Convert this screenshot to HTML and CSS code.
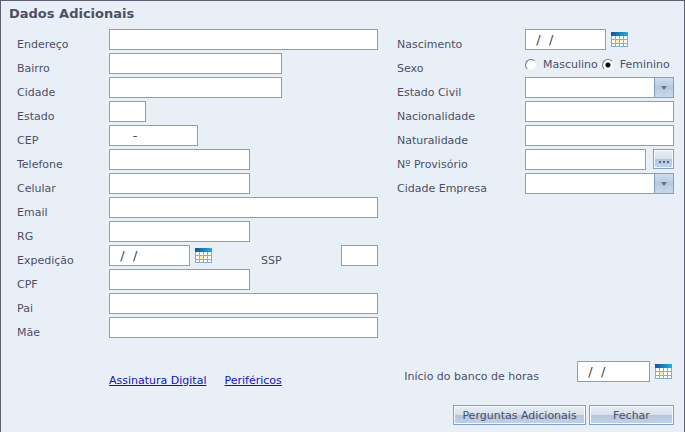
FILE: index.html
```html
<!DOCTYPE html>
<html lang="pt-BR">
  <head>
    <title>Dados Adicionais</title>
    <meta charset="utf-8" />
    <meta name="viewport" content="width=device-width, initial-scale=1" />
    <link rel="stylesheet" href="styles.css">
  </head>

  <body>
    <!-- calendar icon, shared by every date field -->
    <svg class="sprite" aria-hidden="true">
      <defs>
        <linearGradient id="calendarHead">
          <stop offset="0" stop-color="#1253a0" />
          <stop offset="1" stop-color="#14b4ea" />
        </linearGradient>
      </defs>
      <symbol id="calendar" viewBox="0 0 17 15">
        <path fill="#fff" d="M0 4h17v11H0z" />
        <path fill="#86abd0" d="M0 4h1v11H0zM4 4h1v11H4zM8 4h1v11H8zM12 4h1v11h-1zM16 4h1v11h-1zM0 7h17v1H0zM0 11h17v1H0zM0 14h17v1H0z" />
        <path fill="#fff0a0" stroke="#e6a33c" d="M4.500 7.500h4v4h-4z" />
        <path fill="url(#calendarHead)" d="M0 0h17v4H0z" />
      </symbol>
    </svg>

    <form class="panel">
      <h1 class="title">Dados Adicionais</h1>

      <div class="columns">
        <div class="column column--personal">
          <div class="row">
            <label for="endereco">Endereço</label>
            <input id="endereco" class="field" type="text" />
          </div>
          <div class="row">
            <label for="bairro">Bairro</label>
            <input id="bairro" class="field field--large" type="text" />
          </div>
          <div class="row">
            <label for="cidade">Cidade</label>
            <input id="cidade" class="field field--large" type="text" />
          </div>
          <div class="row">
            <label for="estado">Estado</label>
            <input id="estado" class="field field--tiny" type="text" />
          </div>
          <div class="row">
            <label for="cep">CEP</label>
            <input id="cep" class="field field--cep" type="text" value="     -" />
          </div>
          <div class="row">
            <label for="telefone">Telefone</label>
            <input id="telefone" class="field field--medium" type="text" />
          </div>
          <div class="row">
            <label for="celular">Celular</label>
            <input id="celular" class="field field--medium" type="text" />
          </div>
          <div class="row">
            <label for="email">Email</label>
            <input id="email" class="field" type="text" />
          </div>
          <div class="row">
            <label for="rg">RG</label>
            <input id="rg" class="field field--medium" type="text" />
          </div>
          <div class="row">
            <label for="expedicao">Expedição</label>
            <div class="group">
              <input id="expedicao" class="field field--date" type="text" value="  /  /" />
              <button class="calendar" type="button" aria-label="Calendário"><svg><use href="#calendar" /></svg></button>
              <div class="group__end">
                <label for="ssp">SSP</label>
                <input id="ssp" class="field field--tiny" type="text" />
              </div>
            </div>
          </div>
          <div class="row">
            <label for="cpf">CPF</label>
            <input id="cpf" class="field field--medium" type="text" />
          </div>
          <div class="row">
            <label for="pai">Pai</label>
            <input id="pai" class="field" type="text" />
          </div>
          <div class="row">
            <label for="mae">Mãe</label>
            <input id="mae" class="field" type="text" />
          </div>
        </div>

        <div class="column column--civil">
          <div class="row">
            <label for="nascimento">Nascimento</label>
            <div class="group">
              <input id="nascimento" class="field field--date" type="text" value="  /  /" />
              <button class="calendar" type="button" aria-label="Calendário"><svg><use href="#calendar" /></svg></button>
            </div>
          </div>
          <div class="row" role="radiogroup" aria-labelledby="sexo">
            <span id="sexo" class="label">Sexo</span>
            <div class="radios">
              <label><input class="radio" type="radio" name="sexo" />Masculino</label>
              <label><input class="radio" type="radio" name="sexo" checked />Feminino</label>
            </div>
          </div>
          <div class="row">
            <label for="estadoCivil">Estado Civil</label>
            <div class="dropdown">
              <select id="estadoCivil" class="field"><option></option></select>
            </div>
          </div>
          <div class="row">
            <label for="nacionalidade">Nacionalidade</label>
            <input id="nacionalidade" class="field" type="text" />
          </div>
          <div class="row">
            <label for="naturalidade">Naturalidade</label>
            <input id="naturalidade" class="field" type="text" />
          </div>
          <div class="row">
            <label for="provisorio">Nº Provisório</label>
            <div class="group group--lookup">
              <input id="provisorio" class="field" type="text" />
              <button class="button button--more" type="button" aria-label="Procurar"><svg width="10" height="2"><path fill="#53678a" d="M0 0h2v2H0zM4 0h2v2H4zM8 0h2v2H8z" /></svg></button>
            </div>
          </div>
          <div class="row">
            <label for="cidadeEmpresa">Cidade Empresa</label>
            <div class="dropdown">
              <select id="cidadeEmpresa" class="field"><option></option></select>
            </div>
          </div>
        </div>
      </div>

      <div class="extras">
        <nav class="links">
          <a href="#assinatura">Assinatura Digital</a>
          <a href="#perifericos">Periféricos</a>
        </nav>
        <div class="hours">
          <label for="inicio">Início do banco de horas</label>
          <input id="inicio" class="field field--hours" type="text" value="  /  /" />
          <button class="calendar" type="button" aria-label="Calendário"><svg><use href="#calendar" /></svg></button>
        </div>
      </div>

      <div class="actions">
        <button class="button button--wide" type="button">Perguntas Adicionais</button>
        <button class="button button--close" type="button">Fechar</button>
      </div>
    </form>
  </body>
</html>
```
FILE: styles.css
```css
* {
  box-sizing: border-box;
}

body {
  margin: 0;
  background-color: #e9eff7;
  color: #4b4f68;
  font: 11px/15px "DejaVu Sans", Verdana, sans-serif;
}

.sprite {
  position: absolute;
  width: 0;
  height: 0;
}

.panel {
  min-height: 100vh;
  padding: 5px 10px 6px 8px;
  border: 1px solid #5c5f6d;
  border-bottom: 0;
}

.title {
  margin: 0 0 7px;
  font-size: 13px;
  line-height: 16px;
}

.columns {
  display: grid;
  grid-template-columns: 361fr 277fr;
  gap: 19px;
  padding-left: 8px;
}

.column {
  display: flex;
  flex-direction: column;
  gap: 3px;
}

.row {
  display: grid;
  height: 21px;
}

.column--personal .row {
  grid-template-columns: 92px 1fr;
}

.column--civil .row {
  grid-template-columns: 128px 1fr;
}

.row > label,
.label,
.group__end label,
.hours label {
  padding-top: 8px;
  white-space: nowrap;
}

.field {
  width: 100%;
  min-width: 0;
  height: 21px;
  margin: 0;
  padding: 0 2px;
  border: 1px solid #7fa3c6;
  border-radius: 0;
  background-color: #fff;
  color: #444;
  font: 13px "DejaVu Sans", Verdana, sans-serif;
}

.field--large {
  width: 173px;
}

.field--medium {
  width: 141px;
}

.field--cep {
  width: 89px;
}

.field--date {
  width: 81px;
}

.field--hours {
  width: 73px;
}

.field--tiny {
  width: 37px;
}

.group {
  display: flex;
  gap: 5px;
}

.group--lookup {
  gap: 7px;
}

.group__end {
  display: flex;
  justify-content: space-between;
  width: 117px;
  margin-left: auto;
}

.calendar {
  flex: none;
  width: 17px;
  height: 15px;
  margin-top: 3px;
  padding: 0;
  border: 0;
  background: none;
}

.calendar svg {
  display: block;
  width: 17px;
  height: 15px;
}

.radios {
  display: flex;
  align-items: center;
  gap: 4px;
}

.radios label {
  display: flex;
  align-items: center;
  gap: 6px;
}

.radio {
  appearance: none;
  width: 12px;
  height: 12px;
  margin: 0;
  border: 1px solid;
  border-color: #777 #eee #eee #777;
  border-radius: 50%;
  background: #fff;
}

.radio:checked {
  background: radial-gradient(circle, #000 2px, #fff 3px);
}

.dropdown {
  position: relative;
}

.dropdown select {
  appearance: none;
  display: block;
  padding-right: 20px;
  background: linear-gradient(#cfdeec, #b3cae0 50%, #c6daeb) right / 18px 100% no-repeat #fff;
}

/* divider and arrow over the right end of the select */
.dropdown::before {
  content: "";
  position: absolute;
  top: 0;
  right: 19px;
  width: 1px;
  height: 21px;
  background-color: #7fa3c6;
}

.dropdown::after {
  content: "";
  position: absolute;
  top: 9px;
  right: 7px;
  border: 3px solid transparent;
  border-top: 4px solid #60748e;
  border-bottom: 0;
  pointer-events: none;
}

.extras {
  display: flex;
  justify-content: space-between;
  margin-top: 23px;
  padding: 0 2px 0 100px;
}

.links {
  display: flex;
  gap: 18px;
  padding-top: 12px;
}

.links a {
  color: #1212c4;
}

.hours {
  display: flex;
  gap: 5px;
}

.hours label {
  margin-right: 33px;
}

.actions {
  display: flex;
  justify-content: flex-end;
  gap: 3px;
  margin-top: 17px;
}

.button {
  height: 20px;
  padding: 0;
  border: 1px solid #7fa3c6;
  background: linear-gradient(#e6edf5, #d6e1ed 50%, #b4c6dc 50%, #c3d2e4);
  box-shadow: inset 0 0 0 1px #f7fbff;
  color: #4b4f68;
  font: inherit;
}

.button--wide {
  width: 133px;
}

.button--close {
  width: 85px;
}

.button--more {
  display: flex;
  flex: none;
  justify-content: center;
  width: 21px;
  padding-top: 11px;
}
```
